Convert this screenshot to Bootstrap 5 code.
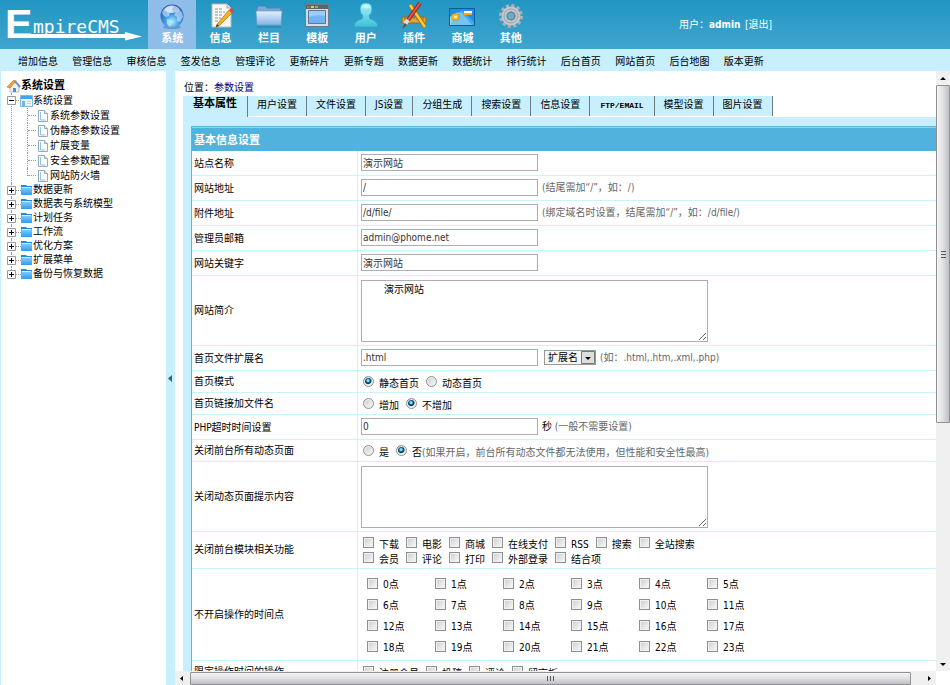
<!DOCTYPE html>
<html lang="zh-CN">
<head>
<meta charset="utf-8">
<meta name="viewport" content="width=device-width, initial-scale=1">
<title>EmpireCMS</title>
<link href="https://cdn.jsdelivr.net/npm/bootstrap@5.3.0/dist/css/bootstrap.min.css" rel="stylesheet">
<style>
:root{--pale:#c7effd;--line:#c9f3fd;--bar:#4fb3de}
body{font:10px/14px "DejaVu Sans Condensed","Noto Sans CJK SC",sans-serif;color:#000}
a{color:inherit;text-decoration:none}
.top-bar{background:linear-gradient(#2196c2,#3fa5cf);height:49px;color:#fff}
.logo-box{width:148px}
.main-nav{display:grid;grid-template-columns:repeat(8,1fr);width:387px}
.main-nav a{display:flex;flex-direction:column;align-items:center;font-weight:700;font-size:11px;line-height:14px;padding-top:2px;height:49px}
.main-nav a.on{background:#8fbdea}
.main-nav svg{width:28px;height:28px;margin-bottom:2px}
.user-box{margin-left:144px;padding-top:18px}
.sub-nav{background:var(--pale);height:22px}
.sub-nav nav{display:grid;grid-template-columns:repeat(14,1fr);width:760px;margin-left:18px;line-height:26px}
.work{background:var(--pale);padding-left:1px}
.side{width:165px;background:#fff;padding:8px 0 0 6px}
.side ul{list-style:none;margin:0;padding:0}
.tree-title{font-size:11px;font-weight:700;height:14px}
.tree li{position:relative}
.tree-row{display:flex;align-items:center;height:14px}
.tree-row.tall{height:15px}
.tree-row svg{flex:none}
.tree-row .fold{margin:0 0 0 4px}
.tree>li::before{content:"";position:absolute;left:4px;top:0;bottom:0;border-left:1px dotted #999}
.tree>li:last-child::before{bottom:7px}
.tree>li>.tree-row::before{content:"";position:absolute;left:9px;width:5px;top:7px;border-top:1px dotted #999}
.tree-row .tog{position:relative}
.tree .kids li{padding-left:31px}
.tree .kids li::before{content:"";position:absolute;left:20px;top:0;bottom:0;border-left:1px dotted #999}
.tree .kids li:last-child::before{bottom:7px}
.tree .kids li::after{content:"";position:absolute;left:21px;width:8px;top:7px;border-top:1px dotted #999}
.tree .kids svg{margin-right:2px}
.grip{width:9px}
.pane{background:#fff;min-width:0}
.crumb{padding:10px 0 0 9px;height:25px}
.crumb a{color:#00008b}
.tabs{display:flex;margin-left:8px;height:21px;list-style:none;padding:0;margin-bottom:0}
.tabs a{display:block;background:var(--pale);height:20px;line-height:18px;padding:0 9px;border-right:1px solid #6b7b80;margin-bottom:1px}
.tabs li:first-child a{font-size:11px;font-weight:700;line-height:15px;height:21px;padding:0 10px}
.tabs .mono{font:700 8px/19px "Liberation Mono",monospace;padding:0 10px}
.sheet{background:var(--pale);margin-left:8px;padding:9px 0 0 8px}
.form-grid{width:100%;border-collapse:separate;border-spacing:0;border:1px solid #5db8de;border-width:1px 0 0 1px;background:#fff}
.form-grid th,.form-grid td{padding:0 3px;vertical-align:middle;text-align:left;font-weight:400;border-bottom:1px solid var(--line)}
.form-grid tbody th{width:166px;padding-left:2px;border-right:1px solid var(--line)}
.form-grid thead th{background:var(--bar);color:#fff;font-weight:700;font-size:11px;height:24px;padding:2px 2px 0;border:0;border-top:1px solid #8bd2ee}
.r-line{height:25px}.r-pick{height:22px}.r-area{height:70px}.r-mods{height:37px}.r-hours{height:92px}
.form-grid .r-line td{padding-bottom:2px}
.form-grid .r-line th{padding-top:1px}
.fld{width:177px;height:17px;border:1px solid #abadb3;padding:0 1px;color:#333;font:inherit;background:#fff;display:block}
.area{width:347px;height:62px;border:1px solid #abadb3;padding:2px 2px;font:inherit;display:block;max-width:100%}
.area.lead-in{text-indent:20px}
.pick-list{width:52px;height:15px;border:1px solid #999;padding:0 15px 0 3px;font:inherit;line-height:13px;color:#000;appearance:none;background:#f6f6f6 url("data:image/svg+xml,%3Csvg xmlns='http://www.w3.org/2000/svg' width='14' height='13'%3E%3Cpath d='M.5.5h13v12H.5z' fill='%23ddd' stroke='%23777'/%3E%3Cpath d='M4 6h6L7 9z'/%3E%3C/svg%3E") right center no-repeat;margin-left:6px}
.hint{color:#666}
.d-flex>.hint,.d-flex>.unit{padding-top:2px}
.opts{display:flex;flex-wrap:wrap;align-items:center;column-gap:7px;padding-left:2px}
.opts label,.hours label{display:flex;align-items:center;gap:5px;height:15px}
.opts label>span,.hours label>span{padding-top:4px}
input[type=checkbox],input[type=radio]{appearance:none;margin:0;width:11px;height:11px;flex:none;border:1px solid #8e8f8f;background:linear-gradient(135deg,#c9cdd2,#fafafa);box-shadow:inset 0 0 0 1px #f1f1f1}
input[type=radio]{border-radius:50%}
input[type=radio]:checked{background:radial-gradient(circle at 45% 40%,#7fe0fa 0 1px,#17648d 2px,#12324d 3px,#e6eef3 4px)}
.hours{display:grid;grid-template-columns:repeat(6,68px);grid-auto-rows:21px;align-items:center;padding-left:6px}
.v-bar{width:14px;background:#f0f0f0}
.h-bar{height:14px;background:#f0f0f0}
.v-thumb{height:338px;flex:0 1 338px;border:1px solid #8f9094;border-radius:1px;background:linear-gradient(90deg,#f5f5f5,#e2e2e4 45%,#bfc0c6)}
.h-thumb{flex:1;height:13px;border:1px solid #8f9094;border-radius:1px;background:linear-gradient(#f5f5f5,#e2e2e4 45%,#bfc0c6)}
.corner{width:14px;height:14px;background:#fff}
</style>
<script src="https://cdn.jsdelivr.net/npm/bootstrap@5.3.0/dist/js/bootstrap.bundle.min.js"></script>
</head>
<body class="vh-100 overflow-hidden d-flex flex-column">
<svg class="position-absolute" width="0" height="0" aria-hidden="true">
<defs>
<linearGradient id="gFold" x1="0" y1="0" x2="0" y2="1"><stop offset="0" stop-color="#e3f1ff"/><stop offset="1" stop-color="#86b4e3"/></linearGradient>
<radialGradient id="gGlobe" cx=".5" cy=".75" r=".75"><stop offset="0" stop-color="#a8f0ff"/><stop offset=".45" stop-color="#3c92e0"/><stop offset="1" stop-color="#1b4fa8"/></radialGradient>
<linearGradient id="gUser" x1="0" y1="0" x2="0" y2="1"><stop offset="0" stop-color="#a6f2fb"/><stop offset="1" stop-color="#3fbfd8"/></linearGradient>
<linearGradient id="gBlue" x1="0" y1="0" x2="0" y2="1"><stop offset="0" stop-color="#7ccbfa"/><stop offset="1" stop-color="#2d9cf0"/></linearGradient>
<symbol id="plus" viewBox="0 0 9 9"><path d="M.5.5h8v8h-8z" fill="#fff" stroke="#999"/><path d="M2 4.500h5M4.500 2v5" stroke="#000"/></symbol>
<symbol id="minus" viewBox="0 0 9 9"><path d="M.5.5h8v8h-8z" fill="#fff" stroke="#999"/><path d="M2 4.500h5" stroke="#000"/></symbol>
<symbol id="folder" viewBox="0 0 13 12"><path d="M1 1h5l1 1h5v9H1z" fill="#2587d8"/><path d="M2 4h10v7H1V5z" fill="url(#gBlue)"/><path d="M1.500 3.500h10" stroke="#c9ecff"/></symbol>
<symbol id="open" viewBox="0 0 13 12"><path d="M.5.500h12v11H.5z" fill="#e9f6ff" stroke="#7fb6dd"/><path d="M1 1h11v3H1z" fill="#3fa5ee"/><path d="M2 6h3v5H2z" fill="#69baf0"/><path d="M7 6.500h4M7 8.500h4" stroke="#b8d5e8"/></symbol>
<symbol id="page" viewBox="0 0 10 12"><path d="M.5.500h6l3 3v8h-9z" fill="#fff" stroke="#9aa9b8"/><path d="M6.500.5v3h3" fill="#dfe9f2" stroke="#9aa9b8"/><path d="M2.500 2v8h5" fill="none" stroke="#8cc5ea"/></symbol>
</defs>
</svg>

<header class="top-bar d-flex">
<a class="logo-box" href="#" aria-label="EmpireCMS">
<svg width="148" height="49" viewBox="0 0 148 49" fill="#fff"><text x="5" y="38" font-family="Liberation Sans" font-weight="700" font-size="41">E</text><text x="33" y="33" font-family="DejaVu Sans Mono" font-size="18">mpireCMS</text><path d="M8 34h117v-2l17 4.500-17 4V38H8z"/></svg>
</a>
<nav class="main-nav">
<a class="on" href="#"><svg viewBox="0 0 28 28"><ellipse cx="14" cy="25" rx="9" ry="2" fill="#4a6f9e" opacity=".5"/><circle cx="14" cy="14" r="11.500" fill="url(#gGlobe)"/><path d="M6 7c3-4 8-4 10-3l-2 3 1 3-3 1-1 3-3 1-3-2-1-3zM17 11l4-3 3 2 1 5-3 5-3-1 0-4-3-2zM9 17l4 1 1 4-2 3-3-3z" fill="#d3edff" opacity=".6"/><path d="M6 8c4-6 13-6 16 0-4 4-12 4-16 0z" fill="#fff" opacity=".6"/></svg>系统</a>
<a href="#"><svg viewBox="0 0 28 28"><path d="M5 2h15l4 4v19H5z" fill="#f8f8f4" stroke="#b8bbb8"/><path d="M20 2v4h4" fill="#ddd" stroke="#aaa"/><path d="M8 7h8M8 10h10M8 13h8M8 16h6M8 19h4" stroke="#8c9494" stroke-dasharray="3 1"/><path d="M11 21 22 8l3 3-12 12-4 2z" fill="#f5b326" stroke="#a46b10" stroke-width=".7"/><path d="m22 8 2-2 3 2-2 3z" fill="#d9483c"/><path d="m9 25 1-3 2 2z" fill="#333"/></svg>信息</a>
<a href="#"><svg viewBox="0 0 28 28"><path d="M2 22V6q0-2 2-2h6l2 2h12q2 0 2 2v14z" fill="#7ba8d6" stroke="#5682b4"/><path d="M1 9h26l-1 14H2z" fill="url(#gFold)" stroke="#6f9bcb" stroke-width=".7"/><path d="M2 25h24" stroke="#23688d" opacity=".5"/></svg>栏目</a>
<a href="#"><svg viewBox="0 0 28 28"><path d="M2.500 2.500h23v22h-23z" fill="#d7dce3" stroke="#6c7a8c"/><path d="M5.500 8.500h17v13h-17z" fill="#9dccf8" stroke="#5b7898"/><path d="M6 15q8-3 16-1v7H6z" fill="#72b4f2"/><path d="M3 3h22v4H3z" fill="#5d6469"/><path d="M4 4h3v2H4z" fill="#f04b37"/><path d="M8 4h3v2H8z" fill="#f8c22e"/><path d="M12 4h3v2h-3z" fill="#60c844"/></svg>模板</a>
<a href="#"><svg viewBox="0 0 28 28"><path d="M2 25q0-6 8-8l1-3q-3-3-3-7 0-6 6-6t6 6q0 4-3 7l1 3q8 2 8 8z" fill="url(#gUser)" stroke="#31a3c0" stroke-width=".7"/><path d="M10 5q4-5 8 0-3 3-8 0z" fill="#fff" opacity=".5"/></svg>用户</a>
<a href="#"><svg viewBox="0 0 28 28"><path d="M2 15h24v6H2z" fill="#dca33e" stroke="#9b6b22"/><path d="M5 15v3M8 15v2M11 15v3M14 15v2M17 15v3M20 15v2M23 15v3" stroke="#835710" stroke-width=".7"/><path d="M10 3 25 25" stroke="#a66b0c" stroke-width="4"/><path d="M10 3 25 25" stroke="#ffcb38" stroke-width="2.500"/><path d="M20 1 8 18" stroke="#a52c20" stroke-width="4"/><path d="M20 1 8 18" stroke="#df5547" stroke-width="2"/><path d="m8 18-3 4" stroke="#ddd" stroke-width="4"/><path d="m5 21-3 6 5-4z" fill="#714524"/></svg>插件</a>
<a href="#"><svg viewBox="0 0 28 28"><path d="M1.500 6.500h25v17h-25z" fill="#1c8fdd" stroke="#0e5b9c"/><path d="M2 15q6-6 12-4l10 12H2z" fill="#fff" opacity=".65"/><path d="M3 20 14 8l12 12v3H3z" fill="#53bbee" opacity=".65"/><path d="M4 12h7v6H4z" fill="#f4bd31" stroke="#b67d14" stroke-width=".6"/><path d="M6 14h3v2H6z" fill="#fff0a5"/><path d="M16 9h8v2h-8z" fill="#fff"/><path d="M16 11h8v2h-8z" fill="#f3a91b"/></svg>商城</a>
<a href="#"><svg viewBox="0 0 28 28"><circle cx="14" cy="14" r="10" fill="none" stroke="#a9b0b7" stroke-width="4" stroke-dasharray="3.100 2.136"/><circle cx="14" cy="14" r="7" fill="none" stroke="#c3c8ce" stroke-width="5"/><circle cx="14" cy="14" r="4" fill="#6da9ca" stroke="#757e87"/><circle cx="14" cy="14" r="7" fill="none" stroke="#8c949b" stroke-width=".7"/></svg>其他</a>
</nav>
<div class="user-box">用户：<b>admin</b>&ensp;<a href="#">[退出]</a></div>
</header>

<div class="sub-nav"><nav>
<a href="#">增加信息</a><a href="#">管理信息</a><a href="#">审核信息</a><a href="#">签发信息</a><a href="#">管理评论</a><a href="#">更新碎片</a><a href="#">更新专题</a><a href="#">数据更新</a><a href="#">数据统计</a><a href="#">排行统计</a><a href="#">后台首页</a><a href="#">网站首页</a><a href="#">后台地图</a><a href="#">版本更新</a>
</nav></div>

<div class="work d-flex flex-grow-1 overflow-hidden">
<aside class="side flex-shrink-0">
<div class="tree-title d-flex align-items-center"><svg width="14" height="13" viewBox="0 0 14 13"><path d="M3 6v6h9V6L8 2z" fill="#f4f2ec" stroke="#a8a6a0" stroke-width=".7"/><path d="M0 7 7 0l2 1-6 7z" fill="#f2a43b" stroke="#c36e20" stroke-width=".6"/><path d="m8 1 5 6" stroke="#6f9bc5" stroke-width="2"/><path d="M6 8h3v4H6z" fill="#4e8fc9"/></svg>系统设置</div>
<ul class="tree">
<li><div class="tree-row tall"><svg class="tog" width="9" height="9"><use href="#minus"/></svg><svg class="fold" width="13" height="12"><use href="#open"/></svg><a href="#">系统设置</a></div>
<ul class="kids">
<li><div class="tree-row tall"><svg width="10" height="12"><use href="#page"/></svg><a href="#">系统参数设置</a></div></li>
<li><div class="tree-row tall"><svg width="10" height="12"><use href="#page"/></svg><a href="#">伪静态参数设置</a></div></li>
<li><div class="tree-row tall"><svg width="10" height="12"><use href="#page"/></svg><a href="#">扩展变量</a></div></li>
<li><div class="tree-row tall"><svg width="10" height="12"><use href="#page"/></svg><a href="#">安全参数配置</a></div></li>
<li><div class="tree-row tall"><svg width="10" height="12"><use href="#page"/></svg><a href="#">网站防火墙</a></div></li>
</ul></li>
<li><div class="tree-row"><svg class="tog" width="9" height="9"><use href="#plus"/></svg><svg class="fold" width="13" height="12"><use href="#folder"/></svg><a href="#">数据更新</a></div></li>
<li><div class="tree-row"><svg class="tog" width="9" height="9"><use href="#plus"/></svg><svg class="fold" width="13" height="12"><use href="#folder"/></svg><a href="#">数据表与系统模型</a></div></li>
<li><div class="tree-row"><svg class="tog" width="9" height="9"><use href="#plus"/></svg><svg class="fold" width="13" height="12"><use href="#folder"/></svg><a href="#">计划任务</a></div></li>
<li><div class="tree-row"><svg class="tog" width="9" height="9"><use href="#plus"/></svg><svg class="fold" width="13" height="12"><use href="#folder"/></svg><a href="#">工作流</a></div></li>
<li><div class="tree-row"><svg class="tog" width="9" height="9"><use href="#plus"/></svg><svg class="fold" width="13" height="12"><use href="#folder"/></svg><a href="#">优化方案</a></div></li>
<li><div class="tree-row"><svg class="tog" width="9" height="9"><use href="#plus"/></svg><svg class="fold" width="13" height="12"><use href="#folder"/></svg><a href="#">扩展菜单</a></div></li>
<li><div class="tree-row"><svg class="tog" width="9" height="9"><use href="#plus"/></svg><svg class="fold" width="13" height="12"><use href="#folder"/></svg><a href="#">备份与恢复数据</a></div></li>
</ul>
</aside>
<div class="grip flex-shrink-0 d-flex align-items-center justify-content-center"><svg width="5" height="7" viewBox="0 0 5 7"><path d="M4 0v7L0 3.500z" fill="#3a6474"/></svg></div>

<div class="flex-grow-1 d-flex flex-column overflow-hidden">
<main class="pane flex-grow-1 overflow-hidden">
<div class="crumb">位置：<a href="#">参数设置</a></div>
<ul class="tabs">
<li><a href="#">基本属性</a></li><li><a href="#">用户设置</a></li><li><a href="#">文件设置</a></li><li><a href="#">JS设置</a></li><li><a href="#">分组生成</a></li><li><a href="#">搜索设置</a></li><li><a href="#">信息设置</a></li><li><a class="mono" href="#">FTP/EMAIL</a></li><li><a href="#">模型设置</a></li><li><a href="#">图片设置</a></li>
</ul>
<form class="sheet">
<table class="form-grid">
<thead><tr><th colspan="2">基本信息设置</th></tr></thead>
<tbody>
<tr class="r-line"><th><label for="f1">站点名称</label></th><td><input class="fld" id="f1" type="text" value="演示网站"></td></tr>
<tr class="r-line"><th><label for="f2">网站地址</label></th><td><div class="d-flex align-items-center gap-1"><input class="fld" id="f2" type="text" value="/"><span class="hint">(结尾需加“/”，如：/)</span></div></td></tr>
<tr class="r-line"><th><label for="f3">附件地址</label></th><td><div class="d-flex align-items-center gap-1"><input class="fld" id="f3" type="text" value="/d/file/"><span class="hint">(绑定域名时设置，结尾需加“/”，如：/d/file/)</span></div></td></tr>
<tr class="r-line"><th><label for="f4">管理员邮箱</label></th><td><input class="fld" id="f4" type="text" value="admin@phome.net"></td></tr>
<tr class="r-line"><th><label for="f5">网站关键字</label></th><td><input class="fld" id="f5" type="text" value="演示网站"></td></tr>
<tr class="r-area"><th><label for="f6">网站简介</label></th><td><textarea class="area lead-in" id="f6">演示网站</textarea></td></tr>
<tr class="r-line"><th><label for="f7">首页文件扩展名</label></th><td><div class="d-flex align-items-center"><input class="fld" id="f7" type="text" value=".html"><select class="pick-list" aria-label="扩展名"><option>扩展名</option></select><span class="hint ms-1">(如：.html,.htm,.xml,.php)</span></div></td></tr>
<tr class="r-pick"><th>首页模式</th><td><div class="opts"><label><input type="radio" name="mode" checked><span>静态首页</span></label><label><input type="radio" name="mode"><span>动态首页</span></label></div></td></tr>
<tr class="r-pick"><th>首页链接加文件名</th><td><div class="opts"><label><input type="radio" name="fname"><span>增加</span></label><label><input type="radio" name="fname" checked><span>不增加</span></label></div></td></tr>
<tr class="r-line"><th><label for="f8">PHP超时时间设置</label></th><td><div class="d-flex align-items-center gap-1"><input class="fld" id="f8" type="text" value="0"><span class="unit">秒 <span class="hint">(一般不需要设置)</span></span></div></td></tr>
<tr class="r-pick"><th>关闭前台所有动态页面</th><td><div class="opts"><label><input type="radio" name="dyn"><span>是</span></label><label><input type="radio" name="dyn" checked><span>否<span class="hint">(如果开启，前台所有动态文件都无法使用，但性能和安全性最高)</span></span></label></div></td></tr>
<tr class="r-area"><th><label for="f9">关闭动态页面提示内容</label></th><td><textarea class="area" id="f9"></textarea></td></tr>
<tr class="r-mods"><th>关闭前台模块相关功能</th><td>
<div class="opts"><label><input type="checkbox"><span>下载</span></label><label><input type="checkbox"><span>电影</span></label><label><input type="checkbox"><span>商城</span></label><label><input type="checkbox"><span>在线支付</span></label><label><input type="checkbox"><span>RSS</span></label><label><input type="checkbox"><span>搜索</span></label><label><input type="checkbox"><span>全站搜索</span></label></div>
<div class="opts"><label><input type="checkbox"><span>会员</span></label><label><input type="checkbox"><span>评论</span></label><label><input type="checkbox"><span>打印</span></label><label><input type="checkbox"><span>外部登录</span></label><label><input type="checkbox"><span>结合项</span></label></div></td></tr>
<tr class="r-hours"><th>不开启操作的时间点</th><td><div class="hours">
<label><input type="checkbox"><span>0点</span></label><label><input type="checkbox"><span>1点</span></label><label><input type="checkbox"><span>2点</span></label><label><input type="checkbox"><span>3点</span></label><label><input type="checkbox"><span>4点</span></label><label><input type="checkbox"><span>5点</span></label>
<label><input type="checkbox"><span>6点</span></label><label><input type="checkbox"><span>7点</span></label><label><input type="checkbox"><span>8点</span></label><label><input type="checkbox"><span>9点</span></label><label><input type="checkbox"><span>10点</span></label><label><input type="checkbox"><span>11点</span></label>
<label><input type="checkbox"><span>12点</span></label><label><input type="checkbox"><span>13点</span></label><label><input type="checkbox"><span>14点</span></label><label><input type="checkbox"><span>15点</span></label><label><input type="checkbox"><span>16点</span></label><label><input type="checkbox"><span>17点</span></label>
<label><input type="checkbox"><span>18点</span></label><label><input type="checkbox"><span>19点</span></label><label><input type="checkbox"><span>20点</span></label><label><input type="checkbox"><span>21点</span></label><label><input type="checkbox"><span>22点</span></label><label><input type="checkbox"><span>23点</span></label>
</div></td></tr>
<tr class="r-pick"><th>限定操作时间的操作</th><td><div class="opts"><label><input type="checkbox"><span>注册会员</span></label><label><input type="checkbox"><span>投稿</span></label><label><input type="checkbox"><span>评论</span></label><label><input type="checkbox"><span>留言板</span></label></div></td></tr>
</tbody>
</table>
</form>
</main>
<div class="h-bar d-flex align-items-center flex-shrink-0">
<svg width="15" height="13"><path d="M8 4v5L5 6.500z"/></svg>
<div class="h-thumb d-flex align-items-center justify-content-center"><svg width="7" height="5"><path d="M.5 0v5M3.500 0v5M6.500 0v5" stroke="#555"/></svg></div>
<svg width="25" height="13"><path d="M17 4v5l3-2.500z"/></svg>
</div>
</div>
<div class="d-flex flex-column flex-shrink-0">
<div class="v-bar flex-grow-1 d-flex flex-column">
<svg width="14" height="14"><path d="M4 9h6L7 6z"/></svg>
<div class="v-thumb d-flex align-items-center justify-content-center"><svg width="5" height="7"><path d="M0 .5h5M0 3.500h5M0 6.500h5" stroke="#555"/></svg></div>
<svg class="mt-auto" width="14" height="14"><path d="M4 6h6L7 9z"/></svg>
</div>
<div class="corner"></div>
</div>
</div>
</body>
</html>
